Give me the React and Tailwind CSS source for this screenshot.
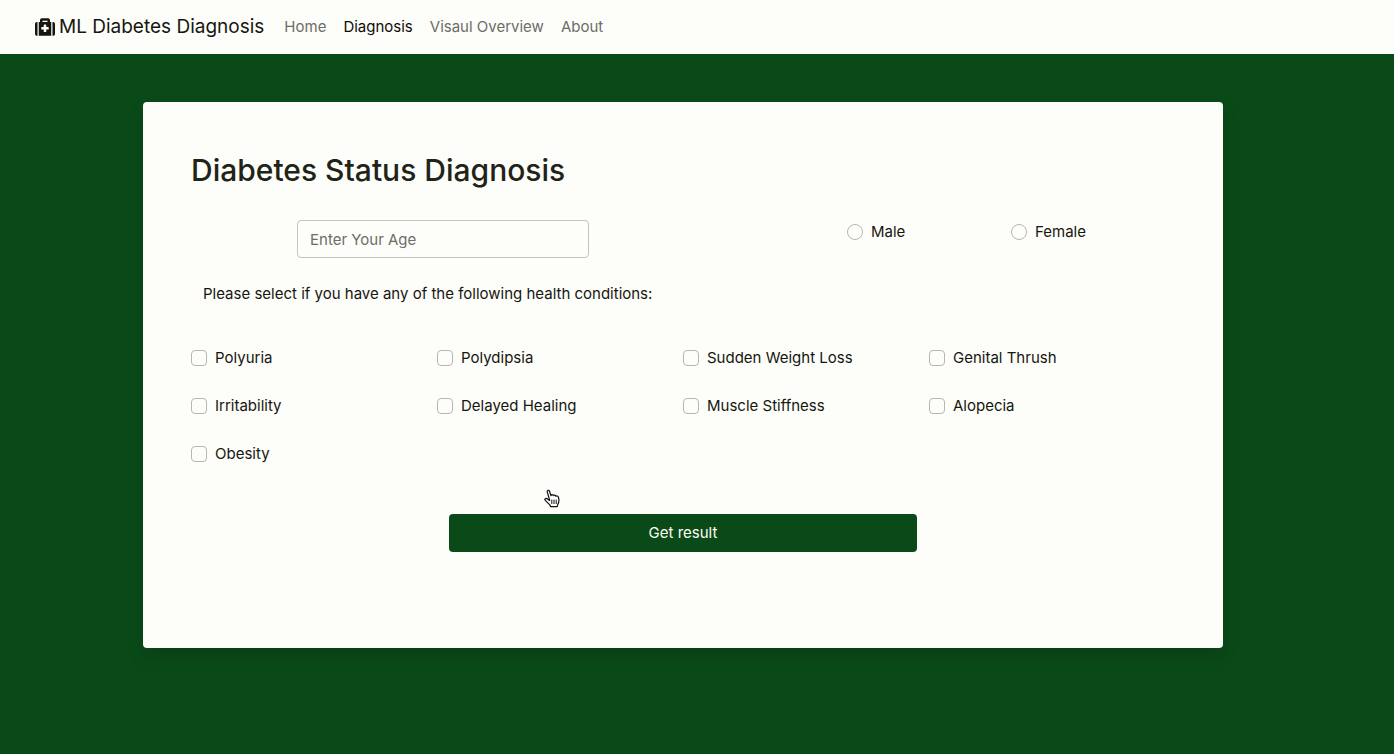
import React from "react";
import { FaMedkit } from "react-icons/fa";

const links = ["Home", "Diagnosis", "Visaul Overview", "About"];

const conditions = [
  "Polyuria",
  "Polydipsia",
  "Sudden Weight Loss",
  "Genital Thrush",
  "Irritability",
  "Delayed Healing",
  "Muscle Stiffness",
  "Alopecia",
  "Obesity",
];

function Navbar() {
  return (
    <nav className="flex h-[54px] items-center bg-[#fdfdfa] pl-[35px]">
      <a href="#" className="flex items-center gap-1 text-[19px] leading-[30px] text-[#15170f]">
        <FaMedkit className="h-5 w-5" />
        ML Diabetes Diagnosis
      </a>
      <ul className="ml-5 flex gap-[17px] text-[15px] leading-6">
        {links.map((name) => (
          <li key={name}>
            <a href="#" className={name === "Diagnosis" ? "text-[#0c0e06]" : "text-[#6c6d66]"}>
              {name}
            </a>
          </li>
        ))}
      </ul>
    </nav>
  );
}

function Choice({ type, name, label }) {
  const id = label.toLowerCase().replaceAll(" ", "-");
  return (
    <div className="flex items-center gap-2">
      <input
        id={id}
        type={type}
        name={name}
        className={
          type === "radio"
            ? "h-4 w-4 shrink-0 appearance-none rounded-full border border-[#b6b7af] bg-[#fdfdfa] checked:bg-[#0a4a19]"
            : "h-4 w-4 shrink-0 appearance-none rounded border border-[#b6b7af] bg-[#fdfdfa] checked:bg-[#0a4a19]"
        }
      />
      <label htmlFor={id}>{label}</label>
    </div>
  );
}

function HandPointer() {
  return (
    <svg
      className="pointer-events-none absolute left-[401px] top-[387px] h-[19px] w-4"
      viewBox="0 0 16 19"
      fill="#fff"
      stroke="#111"
      strokeWidth="1.2"
      strokeLinecap="round"
      strokeLinejoin="round"
      aria-hidden="true"
    >
      <path d="M5.6 11 3.3 3.1C2.8 1.2 4.9.5 5.5 2.2L7 6.7C7.3 5.3 9.1 5.4 9.4 6.7 10 5.7 11.4 6 11.8 7.2 12.7 6.4 14 7 14.4 8.2 15.2 11 15.4 13 13.9 15.1L13.2 17.6H6.7L5.8 15.9 1.3 11.4C.3 10.2 1.4 8.9 2.8 9.6L5.6 11.5Z" />
      <path d="M7.8 11V14.6M10 11V14.6M12.2 11V14.6" fill="none" strokeWidth="1" />
    </svg>
  );
}

export default function App() {
  return (
    <div className="min-h-screen bg-[#0a4a19] font-['Inter','Liberation_Sans',sans-serif] text-[15px] leading-6 text-[#15170f]">
      <Navbar />
      <main className="pl-4 pr-11 pt-12 pb-[106px]">
        <form className="relative mx-auto max-w-[1080px] rounded bg-[#fdfdfa] px-12 pt-12 pb-24 shadow-[0_8px_16px_rgba(0,0,0,0.15)]">
          <h1 className="text-[30px] font-medium leading-10 text-[#212317]">Diabetes Status Diagnosis</h1>
          <div className="mt-[30px] grid grid-cols-2">
            <div className="pl-3">
              <input
                type="number"
                aria-label="Enter Your Age"
                placeholder="Enter Your Age"
                className="mx-auto block h-[38px] w-[292px] max-w-full rounded border border-[#c3c4bc] bg-[#fdfdfa] px-3 placeholder:text-[#6c6d66]"
              />
            </div>
            <div className="ml-[33.333%] grid grid-cols-2 items-start">
              <Choice type="radio" name="gender" label="Male" />
              <Choice type="radio" name="gender" label="Female" />
            </div>
          </div>
          <p className="mt-6 pl-3">Please select if you have any of the following health conditions:</p>
          <div className="mt-10 grid grid-cols-4 gap-y-6">
            {conditions.map((name) => (
              <Choice key={name} type="checkbox" name="conditions" label={name} />
            ))}
          </div>
          <button type="button" className="mx-auto mt-12 block h-[38px] w-[468px] max-w-full rounded bg-[#0a4a19] text-[#fdfdf0]">
            Get result
          </button>
          <HandPointer />
        </form>
      </main>
    </div>
  );
}
